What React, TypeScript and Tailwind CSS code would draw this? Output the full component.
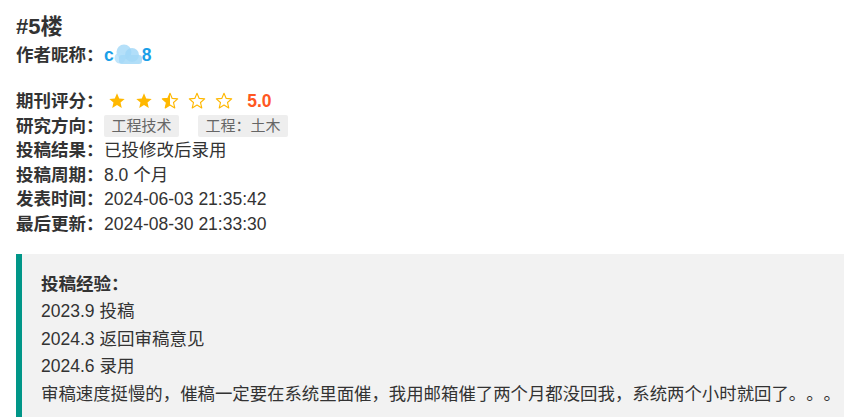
import React from "react";

const STAR = "M12 1.8l2.95 6.75 7.3.62-5.55 4.85 1.65 7.2L12 17.45l-6.35 3.77 1.65-7.2L1.75 9.17l7.3-.62z";

const Star = (props: { kind: "full" | "half" | "empty"; id: string }) => {
  return (
    <svg width="18" height="18" viewBox="0 0 24 24" className="shrink-0">
      <defs>
        <clipPath id={props.id}>
          <rect x="0" y="0" width="12" height="24" />
        </clipPath>
      </defs>
      {props.kind === "full" && <path d={STAR} fill="#FFB800" />}
      {props.kind === "half" && (
        <>
          <path d={STAR} fill="none" stroke="#FFB800" strokeWidth="1.5" strokeLinejoin="round" />
          <path d={STAR} fill="#FFB800" clipPath={`url(#${props.id})`} />
        </>
      )}
      {props.kind === "empty" && (
        <path d={STAR} fill="none" stroke="#FFB800" strokeWidth="1.5" strokeLinejoin="round" />
      )}
    </svg>
  );
};

const Cloud = () => (
  <svg width="30" height="22" viewBox="0 0 30 22" className="inline-block align-middle -mx-[1px]">
    <circle cx="11" cy="8" r="7.5" fill="#a8dbf8" opacity="0.85" />
    <circle cx="19" cy="11" r="7" fill="#9dd6f7" opacity="0.8" />
    <circle cx="7" cy="14" r="5.5" fill="#b5e1fa" opacity="0.85" />
    <rect x="6" y="11" width="23" height="9" rx="3" fill="#a3d8f7" opacity="0.85" />
  </svg>
);

const Row = (props: { label: string; children: React.ReactNode }) => {
  return (
    <div className="flex items-center h-[24.5px]">
      <span className="w-[88px] font-bold shrink-0">{props.label}</span>
      <div className="flex items-center">{props.children}</div>
    </div>
  );
};

const Tag = (props: { text: string }) => (
  <span className="h-[22px] px-[7.5px] bg-[#eeeeee] text-[#666] text-[15px] leading-[22px] rounded-[2px]">
    {props.text}
  </span>
);

export default function App() {
  return (
    <div className="w-[844px] h-[417px] overflow-hidden bg-white text-[#333] font-['Liberation_Sans','Noto_Sans_CJK_SC',sans-serif] text-[17.5px] [text-spacing-trim:space-all]">
      <div className="pl-4 pt-3">
        <h2 className="text-[22px] font-bold leading-[30.5px]">#5楼</h2>
        <div className="flex items-center h-[24.5px]">
          <span className="w-[88px] font-bold shrink-0">作者昵称：</span>
          <span className="flex items-center text-[#1a9fe8] font-bold">
            c<Cloud />8
          </span>
        </div>

        <div className="mt-[22px]">
          <Row label="期刊评分：">
            <div className="flex items-center gap-[8.7px] ml-[4px]">
              <Star kind="full" id="s1" />
              <Star kind="full" id="s2" />
              <Star kind="half" id="s3" />
              <Star kind="empty" id="s4" />
              <Star kind="empty" id="s5" />
            </div>
            <span className="ml-[14.5px] text-[#ff5722] font-bold">5.0</span>
          </Row>
          <Row label="研究方向：">
            <div className="flex items-center gap-[19px]">
              <Tag text="工程技术" />
              <Tag text="工程：土木" />
            </div>
          </Row>
          <Row label="投稿结果：">已投修改后录用</Row>
          <Row label="投稿周期：">8.0 个月</Row>
          <Row label="发表时间：">2024-06-03 21:35:42</Row>
          <Row label="最后更新：">2024-08-30 21:33:30</Row>
        </div>
      </div>

      <div className="ml-4 mt-[17.5px] border-l-[6px] border-[#009688] bg-[#f2f2f2] pl-[19px] pt-[17px] pb-4 leading-[27.5px] whitespace-nowrap">
        <div className="font-bold">投稿经验：</div>
        <div>2023.9 投稿</div>
        <div>2024.3 返回审稿意见</div>
        <div>2024.6 录用</div>
        <div className="text-[17.4px]">审稿速度挺慢的，催稿一定要在系统里面催，我用邮箱催了两个月都没回我，系统两个小时就回了。。。</div>
      </div>
    </div>
  );
}
